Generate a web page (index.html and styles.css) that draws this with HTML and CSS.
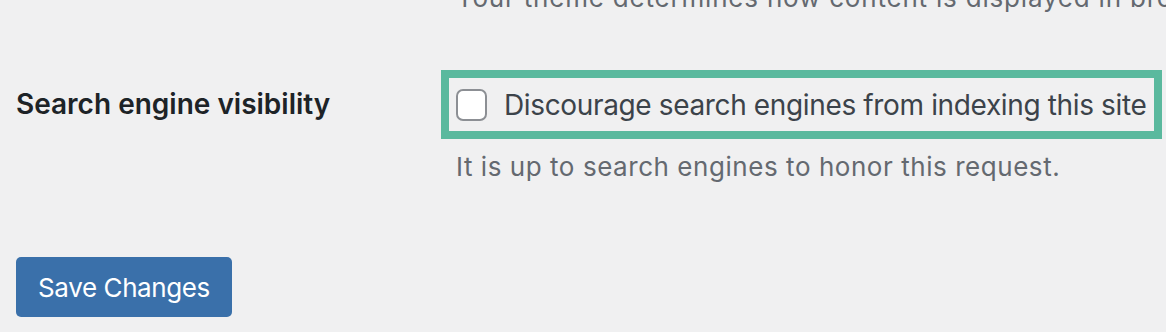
FILE: index.html
```html
<!DOCTYPE html>
<html lang="en">
<head>
<meta charset="utf-8">
<title>Reading Settings</title>
<link rel="stylesheet" href="styles.css">
</head>
<body>
<div class="page">
  <div class="row row-theme">
    <div class="th"></div>
    <div class="td">
      <p class="description theme-note">Your theme determines how content is displayed in browsers.</p>
    </div>
  </div>
  <div class="row row-visibility">
    <div class="th"><span class="label">Search engine visibility</span></div>
    <div class="td">
      <label class="highlight">
        <span class="checkbox"></span>
        <span class="check-text">Discourage search engines from indexing this site</span>
      </label>
      <p class="description note">It is up to search engines to honor this request.</p>
    </div>
  </div>
  <div class="submit">
    <button class="button-primary" type="button">Save Changes</button>
  </div>
</div>
</body>
</html>
```
FILE: styles.css
```css
html, body {
  margin: 0;
  padding: 0;
  background: #f0f0f1;
  overflow: hidden;
}
body {
  font-family: Inter, "Noto Sans", "Liberation Sans", sans-serif;
  color: #1d2327;
}
.page {
  width: 1166px;
  height: 332px;
  padding-left: 16px;
  box-sizing: border-box;
  overflow: hidden;
}
.row {
  display: grid;
  grid-template-columns: 425px 1fr;
}
.th {
  min-width: 0;
}
.td {
  min-width: 0;
  overflow: hidden;
}
.description {
  margin: 0;
  font-size: 26px;
  line-height: 32px;
  letter-spacing: 0.55px;
  color: #646970;
  white-space: nowrap;
  padding-left: 15px;
}
.theme-note {
  letter-spacing: 0.8px;
}
.row-theme {
  margin-top: -18px;
}
.row-visibility {
  margin-top: 56px;
}
.label {
  display: block;
  font-size: 28px;
  font-weight: 600;
  line-height: 32px;
  margin-top: 18px;
  white-space: nowrap;
}
.highlight {
  display: inline-flex;
  align-items: center;
  gap: 17px;
  border: 8px solid #5ab99e;
  padding: 11px 8px 10px 7px;
}
.checkbox {
  display: block;
  flex: none;
  width: 31px;
  height: 32px;
  box-sizing: border-box;
  border: 2px solid #8c8f94;
  border-radius: 7px;
  background: #fff;
}
.check-text {
  font-size: 28px;
  line-height: 32px;
  letter-spacing: -0.36px;
  color: #3c434a;
  white-space: nowrap;
}
.note {
  margin-top: 12px;
}
.submit {
  margin-top: 74px;
}
.button-primary {
  width: 216px;
  height: 60px;
  border: 0;
  border-radius: 5px;
  background: #3a70aa;
  color: #fff;
  font-family: inherit;
  font-size: 26px;
  letter-spacing: -0.4px;
  padding: 0;
}
```
